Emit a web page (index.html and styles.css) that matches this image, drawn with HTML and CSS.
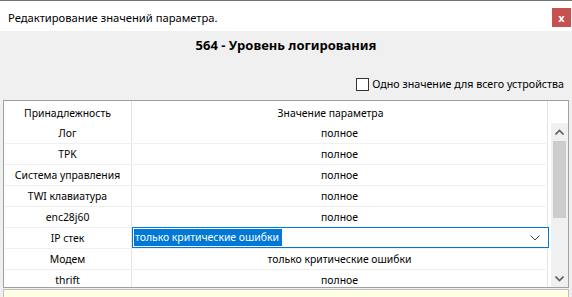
FILE: index.html
```html
<!DOCTYPE html>
<html lang="ru">
<head>
<meta charset="utf-8">
<link rel="stylesheet" href="styles.css">
</head>
<body>
<div class="window">
  <div class="titlebar">
    <span class="title">Редактирование значений параметра.</span>
    <span class="close">x</span>
  </div>
  <div class="content">
    <div class="heading">564 - Уровень логирования</div>
    <label class="check-row"><span class="checkbox"></span><span>Одно значение для всего устройства</span></label>
    <div class="table">
      <div class="header">
        <div class="c1">Принадлежность</div>
        <div class="c2 hdr2">Значение параметра</div>
      </div>
      <div class="body">
        <div class="rows">
          <div class="row"><div class="c1">Лог</div><div class="c2">полное</div></div>
          <div class="row"><div class="c1">TPK</div><div class="c2">полное</div></div>
          <div class="row"><div class="c1">Система управления</div><div class="c2">полное</div></div>
          <div class="row"><div class="c1">TWI клавиатура</div><div class="c2">полное</div></div>
          <div class="row"><div class="c1">enc28j60</div><div class="c2">полное</div></div>
          <div class="row"><div class="c1">IP стек</div>
            <div class="c2 combo"><span class="sel">только критические ошибки</span>
              <svg class="chev" width="10" height="6" viewBox="0 0 10 6"><path d="M0.5 0.5 L5 5 L9.5 0.5" fill="none" stroke="#444" stroke-width="1"/></svg>
            </div>
          </div>
          <div class="row"><div class="c1">Модем</div><div class="c2">только критические ошибки</div></div>
          <div class="row"><div class="c1">thrift</div><div class="c2">полное</div></div>
        </div>
        <div class="scrollbar">
          <div class="arrow"><svg width="9" height="6" viewBox="0 0 9 6"><path d="M0.5 5.5 L4.5 1.5 L8.5 5.5" fill="none" stroke="#606060" stroke-width="1.6"/></svg></div>
          <div class="track"><div class="thumb"></div></div>
          <div class="arrow"><svg width="9" height="6" viewBox="0 0 9 6"><path d="M0.5 0.5 L4.5 4.5 L8.5 0.5" fill="none" stroke="#606060" stroke-width="1.6"/></svg></div>
        </div>
      </div>
    </div>
    <div class="hint"></div>
  </div>
</div>
</body>
</html>
```
FILE: styles.css
```css
* { box-sizing: border-box; }
html, body { margin: 0; padding: 0; }
body {
  width: 572px;
  height: 297px;
  overflow: hidden;
  font-family: "Noto Sans", "Segoe UI", sans-serif;
  font-size: 10.4px;
  color: #000;
  background: #f0f0f0;
}
.window { display: flex; flex-direction: column; height: 297px; }
.titlebar {
  height: 31px;
  flex: none;
  border-top: 1px solid #707070;
  background: #fff;
  display: flex;
  align-items: flex-start;
  justify-content: space-between;
  padding-left: 8px;
}
.title { font-size: 11.2px; margin-top: 9px; line-height: 15px; }
.close {
  width: 19px;
  height: 19px;
  margin-top: 7px;
  margin-right: 1px;
  background: #c75050;
  color: #fff;
  font-weight: bold;
  font-size: 11px;
  display: flex;
  align-items: center;
  justify-content: center;
  line-height: 1;
}
.content { flex: 1; display: flex; flex-direction: column; padding: 0 3px; }
.heading {
  text-align: center;
  font-weight: bold;
  font-size: 13px;
  height: 30px;
  line-height: 28px;
}
.check-row {
  display: flex;
  align-items: center;
  justify-content: flex-end;
  gap: 3px;
  margin-top: 16px;
  height: 14px;
  padding-right: 5px;
  font-size: 10.7px;
}
.checkbox {
  width: 13px;
  height: 13px;
  border: 1px solid #333;
  background: #fff;
}
.table {
  margin-top: 9px;
  height: 188px;
  flex: none;
  border: 1px solid #a0a0a0;
  background: #fff;
  display: flex;
  flex-direction: column;
  overflow: hidden;
}
.header { display: flex; height: 22px; flex: none; align-items: stretch; }
.header .c1, .header .c2 { padding-top: 1px; }
.c1 {
  width: 128px;
  flex: none;
  text-align: center;
  border-right: 1px solid #e3e3e3;
  display: flex;
  align-items: center;
  justify-content: center;
}
.c2 {
  width: 416px;
  flex: none;
  display: flex;
  align-items: center;
  justify-content: center;
  border-right: 1px solid #e3e3e3;
}
.hdr2 { padding-right: 18px; }
.body { display: flex; flex: 1; min-height: 0; }
.rows { display: flex; flex-direction: column; width: 544px; }
.row {
  display: flex;
  height: 21px;
  flex: none;
  border-bottom: 1px solid #f0f0f0;
}
.combo {
  width: 417px;
  border: 1px solid #0078d7;
  justify-content: space-between;
  padding: 0 8px 0 1px;
  margin-top: -1px;
  height: 21px;
}
.sel {
  background: #0078d7;
  color: #fff;
  padding: 0 3px 1px 1px;
  line-height: 16px;
}
.scrollbar {
  width: 17px;
  margin-left: 3px;
  background: #f0f0f0;
  display: flex;
  flex-direction: column;
}
.arrow {
  height: 17px;
  flex: none;
  display: flex;
  align-items: center;
  justify-content: center;
}
.track { flex: 1; padding: 1px 1px; }
.thumb { height: 77px; background: #cdcdcd; margin: 0 1px; }
.hint {
  margin-top: 1px;
  height: 20px;
  flex: none;
  border: 1px solid #c0c0c0;
  background: #ffffe6;
}
```
